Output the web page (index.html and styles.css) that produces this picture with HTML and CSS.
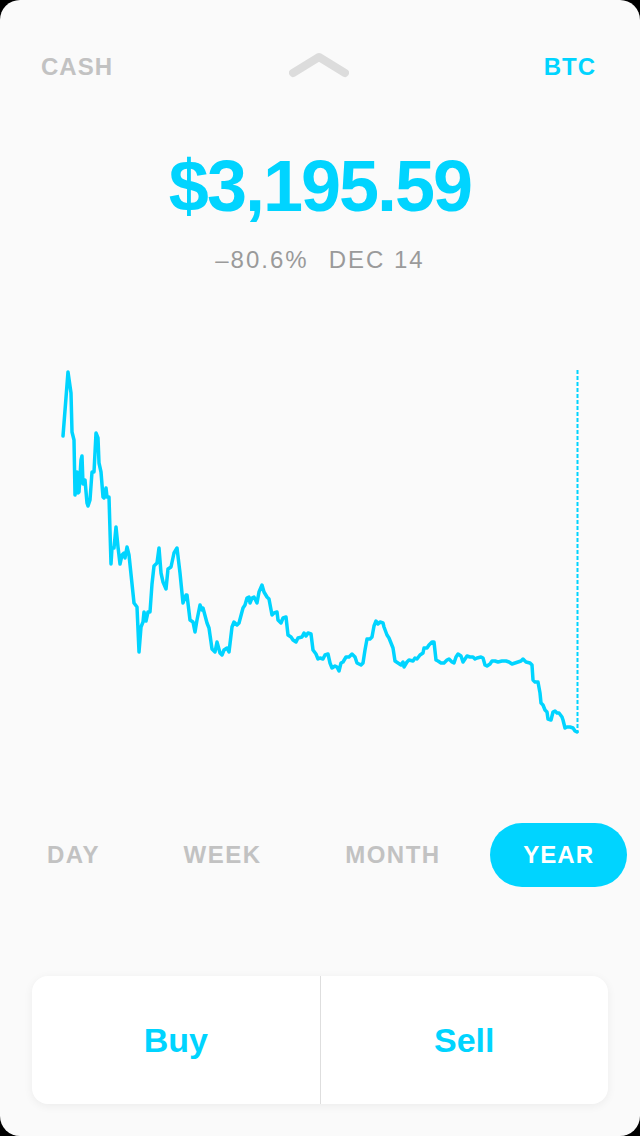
FILE: index.html
```html
<!DOCTYPE html>
<html lang="en">
<head>
    <meta charset="UTF-8">
    <meta name="viewport" content="width=device-width, initial-scale=1.0">
    <title>BTC</title>

    <link rel="stylesheet" href="styles.css">
</head>
<body>

<div class="phone">
    <div class="top">
        <span class="label">CASH</span>
        <svg class="chevron" width="60" height="34" viewBox="0 0 60 34">
            <polyline points="4,23 30,7 56,23" fill="none" stroke="#dcdcdc" stroke-width="8" stroke-linecap="round" stroke-linejoin="round"/>
        </svg>
        <span class="label current">BTC</span>
    </div>

    <div class="price">$3,195.59</div>
    <div class="change"><span>&ndash;80.6%</span><span class="date">DEC 14</span></div>

    <!-- year chart, drawn in page coordinates -->
    <svg class="chart" width="640" height="420" viewBox="0 340 640 420">
        <line x1="577.5" y1="370" x2="577.5" y2="733" stroke="#00d4ff" stroke-width="2" stroke-dasharray="4 2"/>
        <polyline fill="none" stroke="#00d4ff" stroke-width="3.5" stroke-linejoin="round" stroke-linecap="round"
            points="63,436 68,372 71,393 72,432 74,440 75,495 77,472 78,493 79,492 81,460 82,456 83,484 85,480 87,503 88,506 90,500 92,472 94,472 96,433 98,438 99,463 101,472 103,497 104,498 106,488 107,497 109,497 111,564 112,548 114,548 116,527 118,547 120,564 122,555 124,553 125,558 127,547 129,555 134,603 137,607 139,652 141,627 143,622 144,612 146,621 148,612 150,612 152,584 154,566 157,563 159,548 161,573 163,582 166,589 168,569 171,567 174,553 177,548 180,573 183,603 186,595 187,595 190,620 193,622 195,632 197,620 200,605 202,610 203,608 207,623 209,628 212,649 215,652 217,642 220,653 222,655 224,650 227,648 229,652 232,627 234,622 237,625 239,623 243,608 245,605 247,598 249,597 250,603 252,598 254,597 257,603 259,592 262,585 264,592 267,597 269,599 272,615 274,613 277,612 278,620 281,623 283,618 286,617 288,635 291,637 293,640 296,642 298,638 302,637 304,633 306,636 308,633 311,634 313,650 316,654 318,659 320,658 323,659 325,655 328,654 330,663 332,668 335,666 337,667 339,671 341,663 343,662 346,657 349,657 352,654 355,657 357,663 361,665 363,663 365,650 367,639 370,639 372,637 374,626 376,621 378,624 380,622 383,623 384,627 387,635 389,638 391,643 393,648 395,661 398,663 401,665 403,662 404,667 407,662 409,660 413,661 415,658 417,659 420,655 423,653 424,648 427,648 429,645 432,642 434,642 436,660 438,661 441,663 444,663 447,660 449,659 452,662 454,663 456,657 458,654 461,656 463,662 465,659 467,656 470,657 473,657 475,659 477,658 481,657 483,658 485,665 487,666 490,664 492,661 495,661 498,662 502,661 506,661 509,662 512,664 515,663 518,662 521,661 523,659 526,662 530,663 532,665 533,680 535,682 538,682 540,693 541,703 543,705 545,710 547,712 548,719 551,720 553,712 555,711 557,713 559,713 562,717 563,720 565,728 567,727 570,727 573,728 575,731 577,732"/>
    </svg>

    <div class="tabs">
        <span class="tab">DAY</span>
        <span class="tab">WEEK</span>
        <span class="tab">MONTH</span>
        <span class="tab active">YEAR</span>
    </div>

    <div class="actions">
        <button class="action">Buy</button>
        <button class="action">Sell</button>
    </div>
</div>

</body>
</html>
```

FILE: styles.css
```css
body {
    margin: 0;
    background-color: #000;
    font-family: "Liberation Sans", Arial, sans-serif;
}
.phone {
    width: 640px;
    height: 1136px;
    background-color: #fafafa;
    border-radius: 20px;
    overflow: hidden;
    display: flex;
    flex-direction: column;
}
.top {
    display: grid;
    grid-template-columns: 1fr auto 1fr;
    align-items: center;
    padding: 50px 44px 0 41px;
    height: 34px;
}
.label {
    font-size: 24px;
    line-height: 34px;
    font-weight: bold;
    letter-spacing: 1px;
    color: #c2c2c2;
}
.label.current {
    justify-self: end;
    color: #00d4ff;
}
.chevron {
    display: block;
    margin-left: 1px;
}
.price {
    margin-top: 62px;
    text-align: center;
    font-size: 72px;
    line-height: 80px;
    font-weight: bold;
    letter-spacing: -2px;
    color: #00d4ff;
}
.change {
    margin-top: 19px;
    text-align: center;
    font-size: 24px;
    line-height: 30px;
    letter-spacing: 2px;
    color: #9a9a9a;
}
.change .date {
    margin-left: 20px;
}
.chart {
    display: block;
    margin-top: 65px;
}
.tabs {
    display: flex;
    justify-content: space-between;
    margin-top: 63px;
    padding: 0 13px;
}
.tab {
    padding: 0 34px;
    height: 64px;
    line-height: 64px;
    border-radius: 32px;
    font-size: 24px;
    font-weight: bold;
    letter-spacing: 1.5px;
    color: #c2c2c2;
}
.tab.active {
    padding: 0 33px;
    letter-spacing: 1px;
    background-color: #00d4ff;
    color: #fff;
}
.actions {
    display: flex;
    margin: 89px 32px 0 32px;
    height: 128px;
    background: #fff;
    border-radius: 16px;
    box-shadow: 0 2px 10px rgba(0, 0, 0, 0.06);
    overflow: hidden;
}
.action {
    flex: 1;
    border: none;
    background: none;
    font-family: inherit;
    font-size: 34px;
    font-weight: bold;
    color: #00d4ff;
    cursor: pointer;
}
.action + .action {
    border-left: 1px solid #dedede;
}
```
